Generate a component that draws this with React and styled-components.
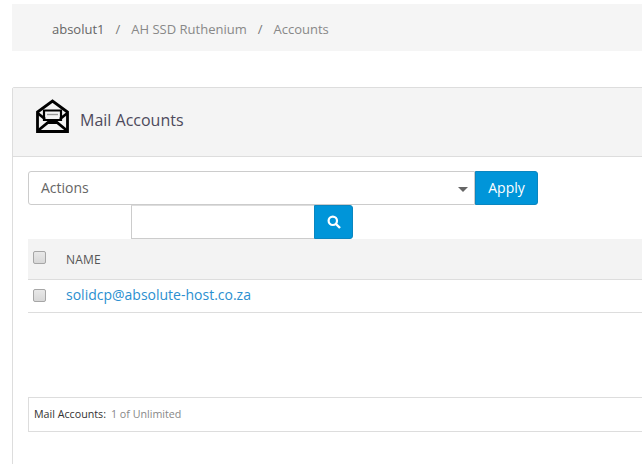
import React from 'react';
import styled, { createGlobalStyle } from 'styled-components';

const GlobalStyle = createGlobalStyle`
    html, body {
        margin: 0;
        padding: 0;
        background: #fff;
        overflow: hidden;
    }
    body {
        font-family: "Open Sans", "Liberation Sans", sans-serif;
        color: #58666e;
    }
`;

const Page = styled.div`
    width: 670px;
    height: 100vh;
    padding: 4px 0 0 12px;
    box-sizing: border-box;
    overflow: hidden;
`;

const Breadcrumb = styled.ol`
    display: flex;
    align-items: center;
    height: 47px;
    margin: 0 0 36px;
    padding: 2px 0 0 40px;
    box-sizing: border-box;
    list-style: none;
    background: #f5f5f5;
    font-size: 13px;
    color: #777;
`;

const Crumb = styled.li`
    color: ${props => props.$strong ? '#666' : '#888'};

    &:not(:first-child)::before {
        content: '/';
        padding: 0 11px;
        color: #777;
    }
`;

const Panel = styled.section`
    border: 1px solid #ddd;
    border-radius: 2px 0 0 0;
    height: 400px;
`;

const PanelHeading = styled.header`
    display: flex;
    align-items: center;
    gap: 11px;
    height: 69px;
    padding: 0 0 4px 23px;
    box-sizing: border-box;
    background: #f4f4f4;
    border-bottom: 1px solid #ddd;
`;

const PanelTitle = styled.h2`
    margin: 0;
    font-size: 16px;
    font-weight: 400;
    color: #4d4a5c;
`;

const HeadingIcon = styled.svg`
    margin-bottom: 9px;
`;

const PanelBody = styled.div`
    padding: 14px 0 0 15px;
`;

const ActionsRow = styled.div`
    display: flex;
`;

const ActionsSelect = styled.div`
    display: flex;
    align-items: center;
    justify-content: space-between;
    width: 447px;
    height: 34px;
    padding: 0 6px 2px 12px;
    box-sizing: border-box;
    background: #fff;
    border: 1px solid #ccc;
    border-radius: 3px 0 0 3px;
    font-size: 14px;
    color: #666;
`;

const Caret = styled.span`
    width: 0;
    height: 0;
    margin-top: 4px;
    border-top: 5px solid #666;
    border-left: 5px solid transparent;
    border-right: 5px solid transparent;
`;

const BlueButton = styled.button`
    display: flex;
    align-items: center;
    justify-content: center;
    width: ${props => props.$width};
    height: 34px;
    padding: 0 0 ${props => props.$lift || '0'};
    background: #0095d9;
    border: 1px solid #0a86c0;
    border-radius: 0 3px 3px 0;
    font-family: inherit;
    font-size: 14px;
    color: #fff;
`;

const SearchRow = styled.div`
    display: flex;
    padding-left: 103px;
`;

const SearchInput = styled.input`
    width: 183px;
    height: 34px;
    padding: 0 8px;
    box-sizing: border-box;
    background: #fff;
    border: 1px solid #ccc;
    border-top-color: #ddd;
    border-right: none;
    outline: none;
`;

const Table = styled.table`
    width: 100%;
    border-collapse: collapse;
    font-size: 14px;
`;

const HeadRow = styled.tr`
    height: 40px;
    background: #f3f3f3;
    border-bottom: 1px solid #ddd;
`;

const BodyRow = styled.tr`
    height: 33px;
    border-bottom: 1px solid #ddd;
`;

const CheckCell = styled.td`
    width: 38px;
    padding: 0 0 ${props => props.$head ? '3px' : '1px'} 5px;
    box-sizing: border-box;
    vertical-align: middle;
    line-height: 0;
`;

const NameHead = styled.th`
    padding: 2px 0 0;
    text-align: left;
    font-size: 12px;
    font-weight: 400;
    color: #555;
    letter-spacing: 0.2px;
`;

const NameCell = styled.td`
    padding: 0 0 2px;
`;

const AccountLink = styled.a`
    color: #2b8fd0;
    text-decoration: none;
`;

const Check = styled.span`
    display: inline-block;
    width: 13px;
    height: 13px;
    box-sizing: border-box;
    background: linear-gradient(#e8e8e8, #d8d8d8);
    border: 1px solid #a6a6a6;
    border-radius: 2px;
`;

const Summary = styled.div`
    display: flex;
    align-items: center;
    gap: 5px;
    height: 35px;
    margin-top: 84px;
    padding-left: 5px;
    box-sizing: border-box;
    border: 1px solid #ddd;
    font-size: 10.7px;
`;

const SummaryLabel = styled.span`
    color: #333;
`;

const SummaryValue = styled.span`
    color: #888;
`;

const EnvelopeIcon = () => (
    <HeadingIcon width="33" height="34" viewBox="0 0 33 34" fill="none" stroke="#000" strokeWidth="2.8">
        <path d="M1.5 32.5V13L16.5 2L31.5 13V32.5Z" strokeLinejoin="miter" />
        <path d="M1.5 14L9 20M31.5 14L24 20M1.5 32L12 23.5H21L31.5 32" />
        <path d="M8 11.5H25V21H8Z" strokeWidth="2.2" />
        <path d="M11 15.5H22" strokeWidth="1.4" stroke="#999" />
    </HeadingIcon>
);

const SearchIcon = () => (
    <svg width="14" height="14" viewBox="0 0 14 14" fill="none" stroke="#fff">
        <circle cx="5.8" cy="5.8" r="4.2" strokeWidth="2.2" />
        <path d="M9 9L13 13" strokeWidth="2.4" />
    </svg>
);

const App = () => (
    <Page>
        <GlobalStyle />
        <Breadcrumb>
            <Crumb $strong>absolut1</Crumb>
            <Crumb>AH SSD Ruthenium</Crumb>
            <Crumb>Accounts</Crumb>
        </Breadcrumb>
        <Panel>
            <PanelHeading>
                <EnvelopeIcon />
                <PanelTitle>Mail Accounts</PanelTitle>
            </PanelHeading>
            <PanelBody>
                <ActionsRow>
                    <ActionsSelect>
                        Actions
                        <Caret />
                    </ActionsSelect>
                    <BlueButton $width="63px" $lift="2px">Apply</BlueButton>
                </ActionsRow>
                <SearchRow>
                    <SearchInput />
                    <BlueButton $width="39px"><SearchIcon /></BlueButton>
                </SearchRow>
                <Table>
                    <tbody>
                        <HeadRow>
                            <CheckCell $head><Check /></CheckCell>
                            <NameHead>NAME</NameHead>
                        </HeadRow>
                        <BodyRow>
                            <CheckCell><Check /></CheckCell>
                            <NameCell>
                                <AccountLink href="#">solidcp@absolute-host.co.za</AccountLink>
                            </NameCell>
                        </BodyRow>
                    </tbody>
                </Table>
                <Summary>
                    <SummaryLabel>Mail Accounts:</SummaryLabel>
                    <SummaryValue>1 of Unlimited</SummaryValue>
                </Summary>
            </PanelBody>
        </Panel>
    </Page>
);

export default App;
